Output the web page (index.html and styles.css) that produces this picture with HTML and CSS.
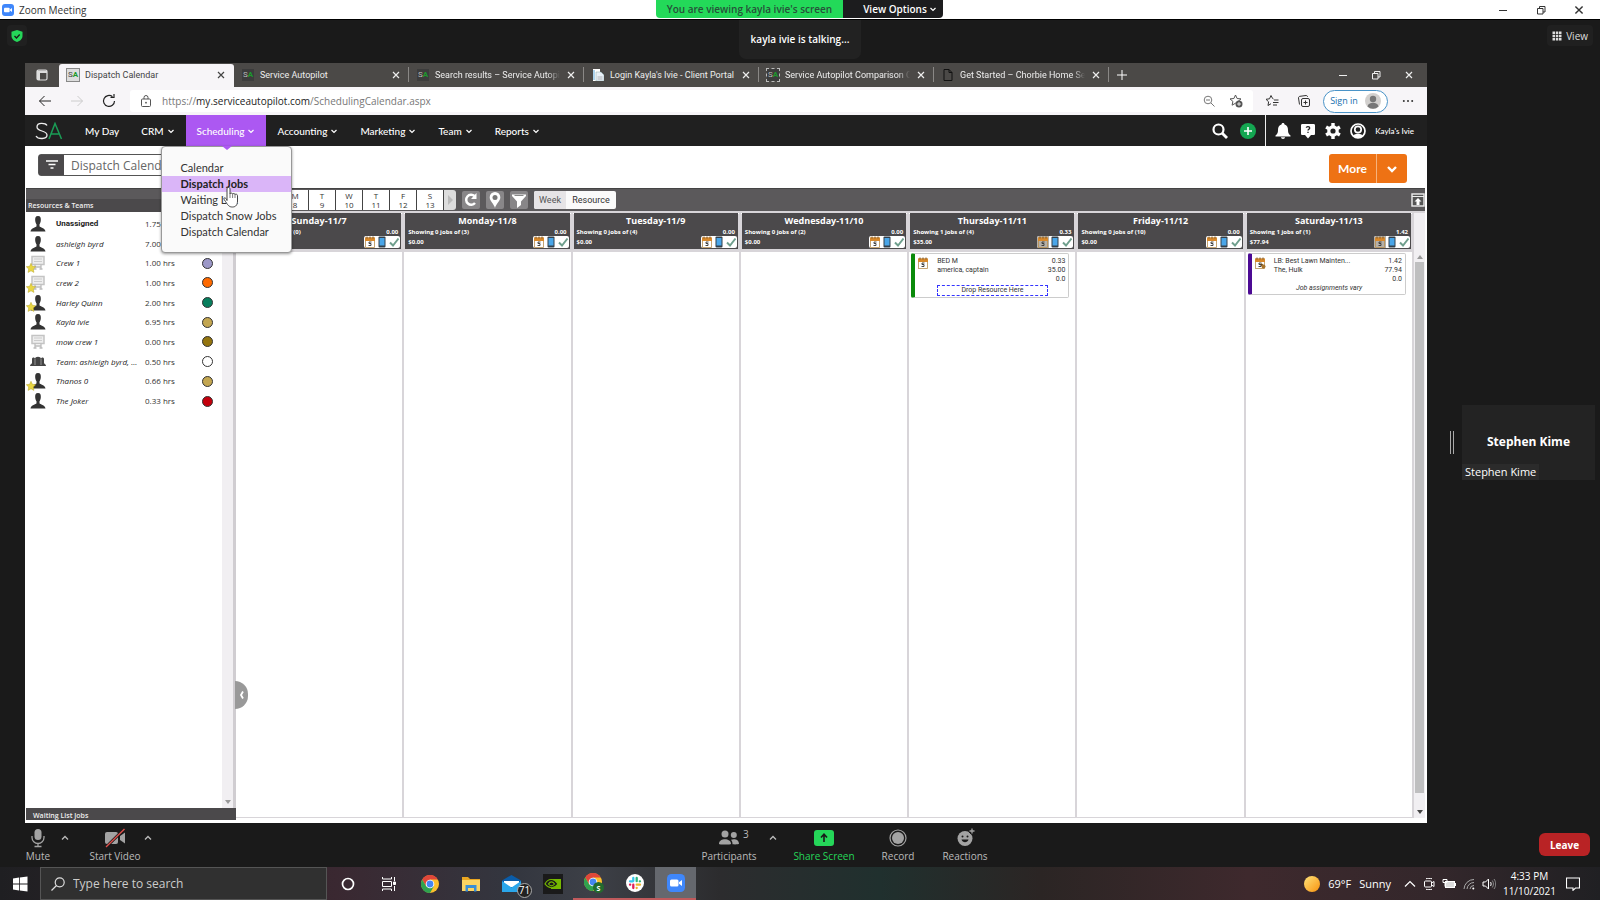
FILE: index.html
```html
<!DOCTYPE html>
<html lang="en">
<head>
    <meta charset="UTF-8">
    <meta name="viewport" content="width=device-width, initial-scale=1.0">
    <title>Zoom Meeting</title>
    <link rel="stylesheet" href="styles.css">
</head>
<body>
    <!-- shared icons -->
    <svg class="sprite" aria-hidden="true">
        <symbol id="i-down" viewBox="0 0 8 8"><path d="M1.5 3l2.500 2.500L6.500 3" fill="none" stroke="currentColor" stroke-width="1.200"/></symbol>
        <symbol id="i-up" viewBox="0 0 8 8"><path d="M1 5.500l3-3 3 3" fill="none" stroke="currentColor" stroke-width="1.300"/></symbol>
        <symbol id="i-x" viewBox="0 0 10 10"><path d="M2 2l6 6M8 2l-6 6" fill="none" stroke="currentColor" stroke-width="1.200"/></symbol>
        <symbol id="i-min" viewBox="0 0 10 10"><path d="M1 5.500h8" stroke="currentColor"/></symbol>
        <symbol id="i-restore" viewBox="0 0 10 10"><path d="M1.500 3.500h5.500v5.500h-5.500zM3.500 3.500v-2h5.500v5.500h-2" fill="none" stroke="currentColor"/></symbol>
        <symbol id="i-person" viewBox="0 0 16 16"><path d="M8 0C5.500 0 5 2 5.200 4.500c.1 2 .8 3 1.300 3.800v2C6 11.500 1 12 .5 15.500h15C15 12 10 11.500 9.500 10.300v-2c.5-.8 1.200-1.800 1.300-3.800C11 2 10.500 0 8 0z" fill="#333"/></symbol>
        <symbol id="i-crew" viewBox="0 0 16 16"><path d="M2 1.500h12v8H2z" fill="#eee" stroke="#c4c4c4" stroke-width="1.500"/><path d="M4 4h8M4 6.500h8" stroke="#ccc"/><path d="M5 9.500v4M11 9.500v4M3.500 14h3M9.500 14h3M5 12h6" fill="none" stroke="#bdbdbd" stroke-width="1.300"/></symbol>
        <symbol id="i-team" viewBox="0 0 16 16"><path d="M0 12c0-2 2-2 2-3V5c0-2 3-2 3 0 0-3 6-3 6 0 0-2 3-2 3 0v4c0 1 2 1 2 3z" fill="#444"/><path d="M5 5v6M11 5v6" stroke="#ccc" stroke-width=".6"/></symbol>
        <symbol id="i-star" viewBox="0 0 10 10"><path d="M5 .3l1.400 3 3.300.4-2.400 2.300.6 3.400L5 7.800 2.100 9.400l.6-3.400L.3 3.700l3.300-.4z" fill="#e8d644" stroke="#b9a52a" stroke-width=".5"/></symbol>
        <symbol id="i-cal" viewBox="0 0 12 12"><rect x="1.500" y="2" width="9" height="9.500" fill="var(--paper, #fff)" stroke="#b78e52" stroke-width=".8"/><path d="M1 1.500h10V5H1z" fill="#d8892b"/><path d="M3 .5v2M6 .5v2M9 .5v2" stroke="#7a5220"/><path d="M7.500 6H5v1.500h2V9.500H4.500" fill="none" stroke="#333" stroke-width=".9"/></symbol>
        <symbol id="i-phone" viewBox="0 0 12 12"><rect x="2.500" y=".5" width="7" height="11" rx="1" fill="#333f4a"/><path d="M3.500 2h5v7.500h-5z" fill="#49a5e8"/></symbol>
        <symbol id="i-check" viewBox="0 0 12 12"><path d="M2 6.500l3 3L10.500 2.500" fill="none" stroke="#6f9f8d" stroke-width="2"/></symbol>
        <symbol id="i-zoom" viewBox="0 0 18 18"><rect width="18" height="18" rx="4.500" fill="#3f87fb"/><rect x="3" y="5.500" width="8.500" height="7" rx="1.500" fill="#fff"/><path d="M12 8.300l3-2.300v6l-3-2.300z" fill="#fff"/></symbol>
        <symbol id="i-chrome" viewBox="0 0 18 18"><circle cx="9" cy="9" r="9" fill="#fbc02d"/><path d="M1.200 4.500A9 9 0 0 1 16.800 4.500H9L5.100 11.300z" fill="#e0473a"/><path d="M1.200 4.500A9 9 0 0 0 9 18l3.900-6.800H5.100z" fill="#2fa24f"/><circle cx="9" cy="9" r="4.300" fill="#fff"/><circle cx="9" cy="9" r="3.400" fill="#4586f1"/></symbol>
    </svg>

    <header class="titlebar">
        <svg class="i12"><use href="#i-zoom"/></svg>
        <span>Zoom Meeting</span>
        <div class="window-buttons">
            <button aria-label="Minimize"><svg class="i10"><use href="#i-min"/></svg></button>
            <button aria-label="Restore"><svg class="i10"><use href="#i-restore"/></svg></button>
            <button aria-label="Close"><svg class="i12"><use href="#i-x"/></svg></button>
        </div>
    </header>
    <div class="share-banner">
        <span class="viewing">You are viewing kayla ivie's screen</span>
        <button class="view-options">View Options <svg class="i8"><use href="#i-down"/></svg></button>
    </div>

    <div class="meeting-top">
        <button class="chip shield" aria-label="Meeting information"><svg class="i12" viewBox="0 0 12 12"><path d="M6 0l5.500 1.800v4C11.500 9 9 11 6 12 3 11 .5 9 .5 5.800v-4z" fill="#25d659"/><path d="M3.500 6l2 2 3.200-3.500" fill="none" stroke="#1a1a1a" stroke-width="1.300"/></svg></button>
        <p class="talking">kayla ivie is talking...</p>
        <button class="chip"><svg class="i10" viewBox="0 0 10 10" fill="#ddd"><path d="M.5.500h2.500v2.500H.5zM3.800.5h2.500v2.500H3.800zM7 .5h2.500v2.500H7zM.5 3.800h2.500v2.500H.5zM3.800 3.800h2.500v2.500H3.800zM7 3.800h2.500v2.500H7zM.5 7h2.500v2.500H.5zM3.800 7h2.500v2.500H3.800zM7 7h2.500v2.500H7z"/></svg> View</button>
    </div>

    <div class="stage">
        <main class="shared">
            <div class="tabs">
                <button class="tab-menu" aria-label="Tab actions"><svg class="i12" viewBox="0 0 12 12"><rect x="1" y="1" width="10" height="10" rx="1.500" fill="none" stroke="#ddd" stroke-width="1.200"/><path d="M1 1.500h10V4H4v7H1z" fill="#ddd"/></svg></button>
                <div class="tab active"><span class="fav light">S<b>A</b></span><span class="tab-name">Dispatch Calendar</span><button aria-label="Close tab"><svg class="i10"><use href="#i-x"/></svg></button></div>
                <div class="tab"><span class="fav">S<b>A</b></span><span class="tab-name">Service Autopilot</span><button aria-label="Close tab"><svg class="i10"><use href="#i-x"/></svg></button></div>
                <div class="tab"><span class="fav">S<b>A</b></span><span class="tab-name fade">Search results – Service Autopilot</span><button aria-label="Close tab"><svg class="i10"><use href="#i-x"/></svg></button></div>
                <div class="tab"><svg class="i12" viewBox="0 0 12 12"><path d="M1 0h7v12H1z" fill="#fff"/><path d="M4 3h5l3 3v6H4z" fill="#e8f0f8" stroke="#8aa" stroke-width=".5"/><path d="M2 1v10" stroke="#58a6dc"/><path d="M5.500 8h5M5.500 10h5" stroke="#888" stroke-width=".6"/></svg><span class="tab-name">Login Kayla's Ivie - Client Portal</span><button aria-label="Close tab"><svg class="i10"><use href="#i-x"/></svg></button></div>
                <div class="tab"><span class="fav dashed">S<b>A</b></span><span class="tab-name fade">Service Autopilot Comparison Ch</span><button aria-label="Close tab"><svg class="i10"><use href="#i-x"/></svg></button></div>
                <div class="tab"><svg class="i12" viewBox="0 0 12 12"><path d="M2 .5h5l3 3v8H2zM7 .5v3h3" fill="none" stroke="#111"/></svg><span class="tab-name fade">Get Started – Chorbie Home Serv</span><button aria-label="Close tab"><svg class="i10"><use href="#i-x"/></svg></button></div>
                <button class="new-tab" aria-label="New tab"><svg class="i12" viewBox="0 0 12 12"><path d="M6 1v10M1 6h10" stroke="#fff"/></svg></button>
                <div class="edge-buttons">
                    <button aria-label="Minimize"><svg class="i10"><use href="#i-min"/></svg></button>
                    <button aria-label="Restore"><svg class="i10"><use href="#i-restore"/></svg></button>
                    <button aria-label="Close"><svg class="i10"><use href="#i-x"/></svg></button>
                </div>
            </div>

            <div class="address-row">
                <button aria-label="Back"><svg class="i14" viewBox="0 0 14 14"><path d="M13 7H1.500M6.500 2l-5 5 5 5" fill="none" stroke="#222"/></svg></button>
                <button aria-label="Forward"><svg class="i14" viewBox="0 0 14 14"><path d="M1 7h11.500M7.500 2l5 5-5 5" fill="none" stroke="#ccc"/></svg></button>
                <button aria-label="Refresh"><svg class="i14" viewBox="0 0 14 14"><path d="M12.500 7a5.500 5.500 0 1 1-2-4.300M8.500 3.500h3.500V0" fill="none" stroke="#222" stroke-width="1.200"/></svg></button>
                <div class="address">
                    <svg class="i12" viewBox="0 0 12 12"><rect x="1.500" y="4" width="9" height="7.500" rx="1" fill="none" stroke="#555"/><path d="M4 4V2.500a2 2 0 0 1 4 0V4" fill="none" stroke="#555"/><circle cx="6" cy="7.700" r=".9" fill="#555"/></svg>
                    <span class="url">https://<b>my.serviceautopilot.com</b>/SchedulingCalendar.aspx</span>
                    <button aria-label="Zoom"><svg class="i12" viewBox="0 0 12 12" fill="none" stroke="#777"><circle cx="5" cy="5" r="3.800"/><path d="M8 8l3.500 3.500M3 5h4"/></svg></button>
                    <button aria-label="Add to favorites"><svg class="i14" viewBox="0 0 14 14"><path d="M6.500 1l1.600 3.500 3.900.4-2.900 2.500.8 3.800-3.400-2-3.400 2 .8-3.800L1 4.900l3.900-.4z" fill="none" stroke="#555"/><circle cx="10" cy="10" r="3.500" fill="#555"/><path d="M10 8v4M8 10h4" stroke="#fff" stroke-width=".8"/></svg></button>
                </div>
                <button aria-label="Favorites"><svg class="i14" viewBox="0 0 14 14" fill="none" stroke="#333"><path d="M8.500 5L7.600 4.500 6 1.500 4.500 4.800 1 5.300l2.600 2.500-.6 3.700 3-1.800"/><path d="M9 6h4.500M8 8.500h5.500M8 11h4"/></svg></button>
                <button class="collections" aria-label="Collections"><svg class="i14" viewBox="0 0 14 14" fill="none" stroke="#333"><rect x="4.500" y="4.500" width="8" height="8" rx="1.500"/><path d="M8.500 6.500v4M6.500 8.500h4M2.500 10.500L1.500 4c0-1 .5-1.500 1.500-1.700L9 1.500c1 0 1.500.5 1.500 1.500"/></svg></button>
                <button class="sign-in">Sign in <svg class="i16" viewBox="0 0 16 16"><circle cx="8" cy="8" r="8" fill="#d2d0ce"/><circle cx="8" cy="6" r="3.200" fill="#777"/><path d="M2.500 13.500c.5-5 10.500-5 11 0a8 8 0 0 1-11 0z" fill="#777"/></svg></button>
                <button class="dots" aria-label="Settings and more"><svg class="i12" viewBox="0 0 12 12" fill="#333"><circle cx="1.800" cy="6" r="1"/><circle cx="6" cy="6" r="1"/><circle cx="10.200" cy="6" r="1"/></svg></button>
            </div>

            <nav class="site-nav">
                <a class="logo" href="#" aria-label="Service Autopilot"><svg viewBox="0 0 28 18"><path d="M12 3.500C10.500 1 2 0 2 5s10 3 10 8c0 4.500-9 4.500-11 1" fill="none" stroke="#eee" stroke-width="1.300"/><path d="M14 17l6-15.500L26.500 17M16 12h8.500" fill="none" stroke="#1a9d56" stroke-width="1.500"/></svg></a>
                <a class="nav-item" href="#">My Day</a>
                <a class="nav-item" href="#">CRM <svg class="i8"><use href="#i-down"/></svg></a>
                <div class="nav-open">
                    <a class="nav-item open" href="#">Scheduling <svg class="i8"><use href="#i-down"/></svg></a>
                    <div class="submenu">
                        <a href="#">Calendar</a>
                        <a class="hover" href="#">Dispatch Jobs</a>
                        <a href="#">Waiting List</a>
                        <a href="#">Dispatch Snow Jobs</a>
                        <a href="#">Dispatch Calendar</a>
                        <svg class="pointer" viewBox="0 0 18 22"><path d="M5 14.500V3c0-2 3-2 3 0v5c0-1.300 2.600-1.200 2.600.2 0-1 2.500-.9 2.500.5 0-.9 2.400-.8 2.400 1V15c0 3.500-1.500 6-5 6-3.500 0-4.500-1.500-8.300-7.500C1 11.500 3.500 11 5 14z" fill="#fff" stroke="#444"/><path d="M8 8v4M10.600 8.500V12M13 9v3" stroke="#444" stroke-width=".7"/></svg>
                    </div>
                </div>
                <a class="nav-item" href="#">Accounting <svg class="i8"><use href="#i-down"/></svg></a>
                <a class="nav-item" href="#">Marketing <svg class="i8"><use href="#i-down"/></svg></a>
                <a class="nav-item" href="#">Team <svg class="i8"><use href="#i-down"/></svg></a>
                <a class="nav-item" href="#">Reports <svg class="i8"><use href="#i-down"/></svg></a>
                <div class="nav-search">
                    <button aria-label="Search"><svg class="i16" viewBox="0 0 16 16" fill="none" stroke="#fff"><circle cx="6.500" cy="6.500" r="5" stroke-width="2.200"/><path d="M10 10l5 5" stroke-width="2.800"/></svg></button>
                    <button aria-label="Add"><svg class="i16" viewBox="0 0 16 16"><circle cx="8" cy="8" r="8" fill="#14a651"/><path d="M8 4v8M4 8h8" stroke="#fff" stroke-width="1.600"/></svg></button>
                </div>
                <div class="nav-user">
                    <button aria-label="Notifications"><svg class="i16" viewBox="0 0 16 16" fill="#fff"><path d="M8 0c1 0 1.500.7 1.500 1.500C12 2.500 13 4 13 7c0 3 .7 4 2.500 5.500V13.500H.5v-1C2.300 11 3 10 3 7c0-3 1-4.500 3.500-5.500C6.500.7 7 0 8 0zM6 14.200h4C10 16.500 6 16.500 6 14.200z"/></svg></button>
                    <button aria-label="Help"><svg class="i16" viewBox="0 0 16 16"><path d="M2.500 1h11C14.500 1 15 1.500 15 2.500v8c0 1-.5 1.500-1.500 1.500H11l-3 3.500L5 12H2.500C1.500 12 1 11.500 1 10.500v-8C1 1.500 1.500 1 2.500 1z" fill="#fff"/><path d="M6.300 4.800C6.500 3 9.700 3.200 9.700 5c0 1.200-1.700 1.300-1.700 2.500M8 8.700V10" fill="none" stroke="#222" stroke-width="1.300"/></svg></button>
                    <button aria-label="Settings"><svg class="i16" viewBox="0 0 16 16"><circle cx="8" cy="8" r="4.200" fill="none" stroke="#fff" stroke-width="3.200"/><path d="M8 0v3M8 13v3M1.100 4l2.600 1.500M12.300 10.500l2.600 1.500M1.100 12l2.600-1.500M12.300 5.500l2.600-1.500" stroke="#fff" stroke-width="3.400"/></svg></button>
                    <button aria-label="Account"><svg class="i16" viewBox="0 0 16 16"><circle cx="8" cy="8" r="7" fill="none" stroke="#fff" stroke-width="1.700"/><circle cx="8" cy="6.500" r="3.200" fill="none" stroke="#fff" stroke-width="1.700"/><path d="M3 13c1.500-3 8.500-3 10 0-2.500 2.500-7.500 2.500-10 0z" fill="#fff"/></svg></button>
                    <span>Kayla's Ivie</span>
                </div>
            </nav>

            <div class="page-head">
                <div class="view-picker">
                    <button aria-label="Filter views"><svg class="i12" viewBox="0 0 12 12"><path d="M0 2h12M2.500 5.500h7M4.500 9h3" stroke="#fff" stroke-width="1.300"/></svg></button>
                    <input type="text" value="Dispatch Calendar" aria-label="View">
                </div>
                <div class="more">
                    <button class="more-main">More</button>
                    <button aria-label="More options"><svg class="i12" viewBox="0 0 12 12"><path d="M2 4l4 4 4-4" fill="none" stroke="#fff" stroke-width="2.400"/></svg></button>
                </div>
            </div>

            <div class="calendar">
                <aside class="resources">
                    <h2>Resources &amp; Teams</h2>
                    <div class="resource-list">
                        <table>
                            <tr><td class="who"><svg class="i16"><use href="#i-person"/></svg></td><th>Unassigned</th><td>1.75 hrs</td><td></td></tr>
                            <tr><td class="who"><svg class="i16"><use href="#i-person"/></svg></td><td class="name">ashleigh byrd</td><td>7.00 hrs</td><td></td></tr>
                            <tr><td class="who"><svg class="i16"><use href="#i-crew"/></svg><svg class="star"><use href="#i-star"/></svg></td><td class="name">Crew 1</td><td>1.00 hrs</td><td><i class="dot lilac"></i></td></tr>
                            <tr><td class="who"><svg class="i16"><use href="#i-crew"/></svg><svg class="star"><use href="#i-star"/></svg></td><td class="name">crew 2</td><td>1.00 hrs</td><td><i class="dot orange"></i></td></tr>
                            <tr><td class="who"><svg class="i16"><use href="#i-person"/></svg><svg class="star"><use href="#i-star"/></svg></td><td class="name">Harley Quinn</td><td>2.00 hrs</td><td><i class="dot green"></i></td></tr>
                            <tr><td class="who"><svg class="i16"><use href="#i-person"/></svg></td><td class="name">Kayla Ivie</td><td>6.95 hrs</td><td><i class="dot tan"></i></td></tr>
                            <tr><td class="who"><svg class="i16"><use href="#i-crew"/></svg></td><td class="name">mow crew 1</td><td>0.00 hrs</td><td><i class="dot brown"></i></td></tr>
                            <tr><td class="who"><svg class="i16"><use href="#i-team"/></svg></td><td class="name">Team: ashleigh byrd, ...</td><td>0.50 hrs</td><td><i class="dot"></i></td></tr>
                            <tr><td class="who"><svg class="i16"><use href="#i-person"/></svg><svg class="star"><use href="#i-star"/></svg></td><td class="name">Thanos 0</td><td>0.66 hrs</td><td><i class="dot tan"></i></td></tr>
                            <tr><td class="who"><svg class="i16"><use href="#i-person"/></svg></td><td class="name">The Joker</td><td>0.33 hrs</td><td><i class="dot red"></i></td></tr>
                        </table>
                        <div class="scroll-left"><i class="arrow-down"></i></div>
                    </div>
                    <h2 class="waiting">Waiting List Jobs</h2>
                    <button class="collapse" aria-label="Collapse panel"><svg class="i10" viewBox="0 0 10 10"><path d="M6 1.500L4 5l2 3.500" fill="none" stroke="#fff" stroke-width="1.800"/></svg></button>
                </aside>

                <section class="schedule">
                    <div class="tools">
                        <div class="mini-week">
                            <button>S<br>7</button><button>M<br>8</button><button>T<br>9</button><button>W<br>10</button><button>T<br>11</button><button>F<br>12</button><button>S<br>13</button>
                            <button class="next" aria-label="Next week"><i></i></button>
                        </div>
                        <button class="tool" aria-label="Refresh"><svg class="i16" viewBox="0 0 16 16"><path d="M12 11a5 5 0 1 1-.5-7" fill="none" stroke="#fff" stroke-width="2.500"/><path d="M13.500 1v6H8z" fill="#fff"/></svg></button>
                        <button class="tool" aria-label="Map"><svg class="i16" viewBox="0 0 16 16"><path d="M8 0a5.300 5.300 0 0 1 5.300 5.500C13.300 9 9 12 8 16 7 12 2.700 9 2.700 5.500A5.300 5.300 0 0 1 8 0z" fill="#fff"/><circle cx="8" cy="5.500" r="2.500" fill="#777"/></svg></button>
                        <button class="tool" aria-label="Filter"><svg class="i16" viewBox="0 0 16 16"><path d="M1 2.500h14V4L10 9.500V13l-4 3V9.500L1 4z" fill="#fff"/><path d="M3.500 3.500h9" stroke="#888"/></svg></button>
                        <div class="mode"><button class="on">Week</button><button>Resource</button></div>
                        <button class="expand" aria-label="Full screen"><svg class="i14" viewBox="0 0 14 14"><rect x="1" y="1" width="12" height="12" fill="#555" stroke="#eee" stroke-width="1.400"/><path d="M1 3.500h12" stroke="#eee"/><path d="M7 5l3.500 3.500H8.500V12h-3V8.500h-2z" fill="#fff"/></svg></button>
                    </div>
                    <div class="board">
                        <div class="days">
                            <div class="day"><header><h3>Sunday-11/7</h3><p><span>Showing 0 jobs of (0)</span><span>0.00</span></p><p><span>$0.00</span></p><div class="flags"><svg><use href="#i-cal"/></svg><svg><use href="#i-phone"/></svg><svg><use href="#i-check"/></svg></div></header></div>
                            <div class="day"><header><h3>Monday-11/8</h3><p><span>Showing 0 jobs of (3)</span><span>0.00</span></p><p><span>$0.00</span></p><div class="flags"><svg><use href="#i-cal"/></svg><svg><use href="#i-phone"/></svg><svg><use href="#i-check"/></svg></div></header></div>
                            <div class="day"><header><h3>Tuesday-11/9</h3><p><span>Showing 0 jobs of (4)</span><span>0.00</span></p><p><span>$0.00</span></p><div class="flags"><svg><use href="#i-cal"/></svg><svg><use href="#i-phone"/></svg><svg><use href="#i-check"/></svg></div></header></div>
                            <div class="day"><header><h3>Wednesday-11/10</h3><p><span>Showing 0 jobs of (2)</span><span>0.00</span></p><p><span>$0.00</span></p><div class="flags"><svg><use href="#i-cal"/></svg><svg><use href="#i-phone"/></svg><svg><use href="#i-check"/></svg></div></header></div>
                            <div class="day"><header><h3>Thursday-11/11</h3><p><span>Showing 1 jobs of (4)</span><span>0.33</span></p><p><span>$35.00</span></p><div class="flags busy"><svg><use href="#i-cal"/></svg><svg><use href="#i-phone"/></svg><svg><use href="#i-check"/></svg></div></header>
                                <article class="job">
                                    <svg class="i12"><use href="#i-cal"/></svg>
                                    <div class="job-text">BED M<br>america, captain</div>
                                    <div class="job-nums">0.33<br>35.00<br>0.0</div>
                                    <p class="drop">Drop Resource Here</p>
                                </article>
                            </div>
                            <div class="day"><header><h3>Friday-11/12</h3><p><span>Showing 0 jobs of (10)</span><span>0.00</span></p><p><span>$0.00</span></p><div class="flags"><svg><use href="#i-cal"/></svg><svg><use href="#i-phone"/></svg><svg><use href="#i-check"/></svg></div></header></div>
                            <div class="day"><header><h3>Saturday-11/13</h3><p><span>Showing 1 jobs of (1)</span><span>1.42</span></p><p><span>$77.94</span></p><div class="flags busy"><svg><use href="#i-cal"/></svg><svg><use href="#i-phone"/></svg><svg><use href="#i-check"/></svg></div></header>
                                <article class="job purple">
                                    <svg class="i12" viewBox="0 0 12 12"><use href="#i-cal"/><path d="M7 7l3.500 3.500" stroke="#6b4a1a" stroke-width="2"/><circle cx="9.500" cy="9.500" r="2" fill="#a8742c"/></svg>
                                    <div class="job-text">LB: Best Lawn Mainten...<br>The, Hulk</div>
                                    <div class="job-nums">1.42<br>77.94<br>0.0</div>
                                    <p class="vary">Job assignments vary</p>
                                </article>
                            </div>
                        </div>
                        <div class="scroll-right"><i class="arrow-up"></i><i class="thumb"></i><i class="arrow-down dark"></i></div>
                    </div>
                </section>
            </div>
        </main>

        <aside class="gallery">
            <i class="grip"></i>
            <div class="tile">
                <strong>Stephen Kime</strong>
                <span>Stephen Kime</span>
            </div>
        </aside>
    </div>

    <div class="meeting-bar">
        <div class="bar-left">
            <button class="action mute"><svg viewBox="0 0 20 20"><rect x="6.500" y="1" width="7" height="11" rx="3.500" fill="#a3a3a3"/><path d="M4 8v1.500a6 6 0 0 0 12 0V8M10 15.500v3M6.500 18.500h7" fill="none" stroke="#a3a3a3" stroke-width="1.300"/></svg>Mute</button>
            <button class="caret" aria-label="Audio options"><svg class="i8"><use href="#i-up"/></svg></button>
            <button class="action video"><svg viewBox="0 0 20 20"><rect x="0" y="4" width="13" height="12" rx="2" fill="#a3a3a3"/><path d="M15 8l5-3.500v11L15 12z" fill="#a3a3a3"/><path d="M1 19L19.500 1" stroke="#1a1a1a" stroke-width="3"/><path d="M1 19L19.500 1" stroke="#e2504c" stroke-width="1.300"/></svg>Start Video</button>
            <button class="caret" aria-label="Video options"><svg class="i8"><use href="#i-up"/></svg></button>
        </div>
        <div class="bar-center">
            <button class="action people"><svg viewBox="0 0 20 20" fill="#a3a3a3"><circle cx="6" cy="6" r="3.500"/><path d="M0 16c-.5-6.500 12.500-6.500 12 0 0 .8-12 .8-12 0z"/><circle cx="14.800" cy="7" r="3"/><path d="M13.500 16.300c0-2-.5-3.300-1.500-4.500 3-1.500 8-.5 8 4 0 .6-4 .7-6.500.5z"/></svg>Participants<span class="count">3</span></button>
            <button class="caret wide" aria-label="Participants options"><svg class="i8"><use href="#i-up"/></svg></button>
            <button class="action share"><svg viewBox="0 0 20 20"><rect y="2" width="20" height="16" rx="3" fill="#25d659"/><path d="M10 14V6.500M7 9.500l3-3.300 3 3.300" fill="none" stroke="#1a1a1a" stroke-width="1.600"/></svg>Share Screen</button>
            <button class="action record"><svg viewBox="0 0 20 20"><circle cx="10" cy="10" r="8" fill="none" stroke="#a3a3a3" stroke-width="1.200"/><circle cx="10" cy="10" r="6" fill="#a3a3a3"/></svg>Record</button>
            <button class="action react"><svg viewBox="0 0 20 20"><circle cx="10" cy="10.500" r="7.500" fill="#a3a3a3"/><path d="M17 0v6M14 3h6" stroke="#1a1a1a" stroke-width="4"/><path d="M17 .5v5M14.500 3h5" stroke="#a3a3a3" stroke-width="1.300"/><path d="M6.500 11.500c1 3.500 6 3.500 7 0z" fill="#1a1a1a"/><circle cx="7.500" cy="8.500" r="1" fill="#1a1a1a"/><circle cx="12.500" cy="8.500" r="1" fill="#1a1a1a"/></svg>Reactions</button>
        </div>
        <button class="leave">Leave</button>
    </div>

    <footer class="taskbar">
        <button class="start" aria-label="Start"><svg class="i16" viewBox="0 0 16 16" fill="#fff"><path d="M1 2.500l6-.9v6H1zM7.800 1.500L15.500.5v7.100H7.800zM1 8.400h6v6l-6-.9zM7.800 8.400h7.700v7.100l-7.700-1z"/></svg></button>
        <label class="search">
            <svg class="i14" viewBox="0 0 14 14" fill="none" stroke="#ddd" stroke-width="1.200"><circle cx="8.700" cy="5.300" r="4.500"/><path d="M5.500 8.500L.5 13.500"/></svg>
            <input type="text" placeholder="Type here to search" aria-label="Type here to search">
        </label>
        <button class="app" aria-label="Cortana"><svg class="i14" viewBox="0 0 14 14"><circle cx="7" cy="7" r="5.500" fill="none" stroke="#fff" stroke-width="1.700"/></svg></button>
        <button class="app" aria-label="Task view"><svg class="i14" viewBox="0 0 14 14" fill="none" stroke="#fff"><path d="M.5 4.500h9v5h-9zM.5 0v2h9V0M.5 14v-2h9v2M12.500 0v4M12.500 9v5"/><path d="M11.500 5h2v2.500h-2z" fill="#fff"/></svg></button>
        <button class="app" aria-label="Chrome"><svg class="i18"><use href="#i-chrome"/></svg></button>
        <button class="app" aria-label="File Explorer"><svg class="i18" viewBox="0 0 18 18"><path d="M0 2h6l2 2h10v12H0z" fill="#e9a621"/><path d="M0 5h18v11H0z" fill="#fcd462"/><path d="M3.500 10h11v6.500h-2.500V13H6v3.500H3.500z" fill="#3a8fd6"/></svg></button>
        <button class="app" aria-label="Mail"><svg class="i20" viewBox="0 0 20 20"><path d="M0 6.500L9.500 1 19 6.500V18H0z" fill="#0a5ca8"/><path d="M2 7h15v6H2z" fill="#fff"/><path d="M0 7l9.500 6.500L19 7v11H0z" fill="#2aa6ea"/></svg><span class="badge">71</span></button>
        <button class="app" aria-label="GeForce Experience"><svg class="i20" viewBox="0 0 20 20"><path d="M0 0h20v20H0z" fill="#1a1a1a"/><path d="M8 5h10v10H8z" fill="#76b900"/><path d="M2 10c3-6 9-6 13 0-4 5-9 5-13 0z" fill="#1a1a1a" stroke="#76b900" stroke-width="1.200"/><path d="M5.500 10c2-3 4.500-2.500 6 0-2 2.500-4 2.500-6 0z" fill="none" stroke="#76b900" stroke-width="1.200"/></svg></button>
        <button class="app running" aria-label="Chrome profile"><svg class="i20" viewBox="0 0 20 20"><g><use href="#i-chrome" width="18" height="18"/></g><circle cx="14.500" cy="14.500" r="5.500" fill="#236b2e"/><text x="12.500" y="17.500" class="profile">S</text></svg></button>
        <button class="app running" aria-label="Slack"><svg class="i18" viewBox="0 0 18 18"><circle cx="9" cy="9" r="9" fill="#fff"/><g stroke-width="2.300" stroke-linecap="round"><path d="M7.300 4v3M4 7.300h3" stroke="#36c5f0"/><path d="M10.700 4v3.200M14 7.300h-.2" stroke="#2eb67d"/><path d="M10.700 10.700H14M10.700 13.800v.2" stroke="#ecb22e"/><path d="M7.300 10.700V14M4 10.700h.2" stroke="#e01e5a"/></g></svg></button>
        <button class="app running current" aria-label="Zoom"><svg class="i18"><use href="#i-zoom"/></svg></button>
        <div class="tray">
            <span class="weather"><i class="sun"></i>69°F <span>Sunny</span></span>
            <svg class="i12" viewBox="0 0 12 12"><path d="M1 8.500l5-5 5 5" fill="none" stroke="#fff" stroke-width="1.200"/></svg>
            <svg class="i12" viewBox="0 0 12 12" fill="none" stroke="#fff"><rect x="1.500" y="3" width="7" height="6" rx="1"/><path d="M8.500 5l2.500-1.500v5L8.500 7M3 .7c1.500-.4 4-.4 6 0M3 11.300c1.500.4 4 .4 6 0"/></svg>
            <svg class="i14" viewBox="0 0 14 14"><rect x="3.500" y="4.500" width="9" height="6" fill="#ddd" stroke="#fff"/><path d="M13.500 6v3M1 2.500h4v3H1zM3 5.500v4" fill="none" stroke="#fff"/></svg>
            <svg class="i12" viewBox="0 0 12 12" fill="none" stroke="#aaa"><path d="M1 11A10 10 0 0 1 11 1.500M4 11a7 7 0 0 1 7-6.500M7 11a4 4 0 0 1 4-3.500"/><circle cx="10.300" cy="10.500" r="1" fill="#fff" stroke="none"/></svg>
            <svg class="i14" viewBox="0 0 14 14" fill="none" stroke="#fff"><path d="M1 5h2.500l3-3v10l-3-3H1zM8.500 5c.8 1 .8 3 0 4"/><path d="M10.300 3.500c1.500 2 1.500 5 0 7M12 2c2.200 3 2.200 7 0 10" stroke="#888"/></svg>
            <time>4:33 PM<br>11/10/2021</time>
            <svg class="note" viewBox="0 0 14 14"><path d="M.5 1h13v10H9.500L7 13.300V11H.5z" fill="none" stroke="#fff" stroke-width="1.100"/></svg>
        </div>
    </footer>
</body>
</html>
```
FILE: styles.css
```css
* {
    box-sizing: border-box;
}

body {
    margin: 0;
    min-height: 100vh;
    display: flex;
    flex-direction: column;
    position: relative;
    background: #1a1a1a;
    color: #fff;
    font-family: "Open Sans", "Noto Sans", sans-serif;
    font-size: 10px;
    line-height: 12px;
}

button, input {
    font: inherit;
    color: inherit;
    background: none;
    border: 0;
    padding: 0;
    margin: 0;
}

button {
    display: flex;
    align-items: center;
    justify-content: center;
}

a {
    color: inherit;
    text-decoration: none;
}

h2, h3, p {
    margin: 0;
}

svg {
    flex: none;
    display: block;
}

.sprite {
    position: absolute;
    width: 0;
    height: 0;
}

.i8 { width: 8px; height: 8px; }
.i10 { width: 10px; height: 10px; }
.i12 { width: 12px; height: 12px; }
.i14 { width: 14px; height: 14px; }
.i16 { width: 16px; height: 16px; }
.i18 { width: 18px; height: 18px; }
.i20 { width: 20px; height: 20px; }

/* zoom window */
.titlebar {
    display: flex;
    align-items: center;
    gap: 5px;
    height: 20px;
    padding: 0 2px;
    background: #fff;
    border-bottom: 1px solid #000;
    color: #333;
}

.window-buttons {
    display: flex;
    margin-left: auto;
}

.window-buttons button {
    width: 38px;
}

.share-banner {
    position: absolute;
    top: 0;
    left: 50%;
    width: 287px;
    margin-left: -144px;
    height: 18px;
    display: flex;
    border-radius: 0 0 4px 4px;
    overflow: hidden;
    font-weight: 600;
}

.viewing {
    flex: none;
    width: 187px;
    line-height: 18px;
    text-align: center;
    background: #23d959;
    color: #27503a;
}

.view-options {
    flex: 1;
    gap: 2px;
    padding-left: 14px;
    background: #1c1c1e;
}

.meeting-top {
    display: flex;
    justify-content: space-between;
    height: 43px;
    padding: 0 7px;
    position: relative;
}

.chip {
    height: 21px;
    margin-top: 5px;
    padding: 0 5px;
    gap: 4px;
    border-radius: 4px;
    background: #202020;
    color: #ddd;
}

.shield {
    padding: 0 4px;
}

.talking {
    position: absolute;
    left: 50%;
    width: 122px;
    margin-left: -61px;
    line-height: 39px;
    text-align: center;
    font-weight: 600;
    background: #222;
    border-radius: 0 0 7px 7px;
}

.stage {
    flex: 1;
    display: flex;
    padding-left: 25px;
}

.shared {
    flex: 1;
    display: flex;
    flex-direction: column;
    min-width: 0;
    padding-bottom: 3px;
    background: #fff;
    color: #333;
}

/* browser */
.tabs {
    display: flex;
    height: 24px;
    background: #4b4947;
    color: #eee;
    font-family: Roboto, sans-serif;
    font-size: 9px;
}

.tab-menu {
    width: 34px;
}

.tab {
    position: relative;
    flex: 0 1 175px;
    min-width: 0;
    display: flex;
    align-items: center;
    gap: 6px;
    padding: 0 8px 1px;
}

.tab:not(.active)::after {
    content: "";
    position: absolute;
    right: 0;
    width: 1px;
    height: 15px;
    background: #8a8886;
}

.tab.active {
    margin-top: 1px;
    padding-bottom: 2px;
    background: #f7f5f8;
    border-radius: 3px 3px 0 0;
    color: #444;
}

.tab-name {
    flex: 1;
    overflow: hidden;
    white-space: nowrap;
}

.fade {
    mask-image: linear-gradient(90deg, #000 90%, transparent);
}

.fav {
    width: 12px;
    height: 12px;
    font-size: 8px;
    line-height: 12px;
    text-align: center;
    background: #3c3c3c;
    color: #bbb;
}

.fav b {
    color: #1c9a2c;
}

.fav.light {
    background: #ddd;
    color: #444;
    outline: 1px solid #888;
}

.fav.dashed {
    outline: 1px dashed #bbb;
}

.new-tab {
    width: 26px;
}

.edge-buttons {
    display: flex;
    margin-left: auto;
    padding-right: 2px;
}

.edge-buttons button {
    width: 33px;
}

.address-row {
    display: flex;
    align-items: center;
    height: 28px;
    padding-left: 4px;
    background: #f7f5f8;
}

.address-row > button {
    width: 32px;
}

.address {
    flex: 1;
    display: flex;
    align-items: center;
    gap: 10px;
    height: 22px;
    margin-left: 5px;
    margin-right: 3px;
    padding: 0 10px;
    border-radius: 3px;
    background: #fff;
    color: #777;
}

.address button {
    margin-left: 4px;
}

.url {
    flex: 1;
}

.url b {
    font-weight: 400;
    color: #222;
}

.address-row .sign-in {
    width: 65px;
    height: 23px;
    margin-left: 3px;
    gap: 7px;
    border: 1px solid #4a94c8;
    border-radius: 12px;
    background: #fff;
    color: #1670ae;
    font-size: 9px;
}

.address-row .dots {
    width: 39px;
}

/* service autopilot */
.site-nav {
    display: flex;
    height: 31px;
    padding-right: 13px;
    background: #202020;
    color: #fff;
    font-family: Lato, sans-serif;
    font-weight: 500;
}

.logo {
    display: flex;
    align-items: center;
    width: 49px;
    padding-left: 10px;
}

.logo svg {
    width: 28px;
    height: 18px;
}

.nav-item {
    display: flex;
    align-items: center;
    gap: 3px;
    height: 31px;
    padding: 0 11px;
}

.nav-open {
    position: relative;
}

.nav-item.open {
    background: #ac58f2;
}

.submenu {
    position: absolute;
    z-index: 2;
    top: 31px;
    left: -25px;
    width: 131px;
    height: 107px;
    padding-top: 13px;
    border: 1px solid #999;
    border-radius: 4px;
    background: #fafafa;
    box-shadow: 0 1px 3px rgba(0,0,0,0.4);
    color: #333;
    font-size: 11px;
    font-weight: 400;
}

.submenu::before {
    content: "";
    position: absolute;
    top: -1px;
    left: 60px;
    border: 5px solid transparent;
    border-top: 4px solid #ac58f2;
    border-bottom: 0;
}

.submenu a {
    display: block;
    padding-left: 19px;
    line-height: 16px;
}

.submenu .hover {
    background: #dab5f8;
    color: #222;
    font-weight: 700;
}

.pointer {
    position: absolute;
    left: 60px;
    top: 39px;
    width: 18px;
    height: 22px;
}

.nav-search, .nav-user {
    display: flex;
    align-items: center;
}

.nav-search {
    margin-left: auto;
    gap: 12px;
    padding-right: 9px;
    border-right: 1px solid #eee;
}

.nav-user {
    gap: 9px;
    padding-left: 9px;
    font-size: 8px;
}

.page-head {
    display: flex;
    justify-content: space-between;
    height: 42px;
    padding: 8px 20px 0 13px;
}

.view-picker {
    display: flex;
    width: 180px;
    height: 22px;
    border: 1px solid #555;
    border-radius: 3px;
}

.view-picker button {
    width: 25px;
    background: #4b494b;
}

.view-picker input {
    flex: 1;
    min-width: 0;
    padding-left: 7px;
    font-size: 12px;
    color: #666;
}

.more {
    display: flex;
    height: 29px;
    border-radius: 3px;
    overflow: hidden;
    background: #ee7214;
    color: #fff;
    font-family: Lato, sans-serif;
    font-size: 12px;
    font-weight: 700;
}

.more button {
    width: 30px;
}

.more .more-main {
    width: 48px;
    border-right: 1px solid #f6b27c;
}

.calendar {
    flex: 1;
    display: flex;
}

.resources {
    position: relative;
    display: flex;
    flex-direction: column;
    width: 211px;
    padding-left: 1px;
    border-right: 3px solid #d0cdd1;
}

.resources h2 {
    height: 24px;
    padding: 11px 0 0 2px;
    margin-right: -3px;
    border-top: 1px solid #444;
    background: linear-gradient(#5b595b 10px, #4b494b 10px);
    color: #eee;
    font-size: 7px;
    font-weight: 600;
    line-height: 12px;
}

.resource-list {
    flex: 1;
    display: flex;
    justify-content: space-between;
    align-items: flex-start;
}

.resource-list table {
    flex: 1;
    height: 197px;
    margin-top: 2px;
    border-collapse: collapse;
    table-layout: fixed;
    font-size: 8px;
    line-height: 10px;
}

.resource-list th, .resource-list td {
    padding: 0;
    text-align: left;
}

.resource-list .who {
    position: relative;
    width: 30px;
    padding-left: 4px;
}

.star {
    position: absolute;
    left: 0;
    bottom: 0;
    width: 10px;
    height: 10px;
}

.resource-list th, .resource-list .name {
    width: 89px;
    color: #222;
}

.resource-list th {
    font-family: Roboto, sans-serif;
}

.name {
    font-style: italic;
}

.dot {
    display: block;
    width: 11px;
    height: 11px;
    margin-left: 18px;
    border: 1px solid #333;
    border-radius: 50%;
    background: #fff;
}

.lilac { background: #9c98c8; }
.orange { background: #ff6a00; }
.green { background: #087f5e; }
.tan { background: #c3a650; }
.brown { background: #94750f; }
.red { background: #c4000c; }

.scroll-left, .scroll-right {
    display: flex;
    flex-direction: column;
    align-items: center;
    align-self: stretch;
    width: 11px;
    padding: 4px 0;
    background: #f1eff2;
}

.scroll-right {
    padding-top: 42px;
}

.arrow-up, .arrow-down {
    width: 0;
    border: 3px solid transparent;
}

.arrow-up {
    border-top: 0;
    border-bottom: 4px solid #999;
}

.arrow-down {
    margin-top: auto;
    border-bottom: 0;
    border-top: 4px solid #999;
}

.arrow-down.dark {
    border-top-color: #444;
}

.thumb {
    flex: 1;
    width: 9px;
    margin: 3px 0 17px;
    background: #bfbfc0;
}

.resources .waiting {
    height: 12px;
    padding: 2px 0 0 7px;
    border: 0;
    background: #4b494b;
}

.collapse {
    position: absolute;
    z-index: 1;
    right: -15px;
    bottom: 111px;
    width: 13px;
    height: 28px;
    border-radius: 0 13px 13px 0;
    background: #999;
}

.schedule {
    flex: 1;
    display: flex;
    flex-direction: column;
    min-width: 0;
}

.tools {
    display: flex;
    align-items: center;
    gap: 6px;
    height: 23px;
    margin-right: 2px;
    padding: 0 0 1px 19px;
    border-top: 1px solid #444;
    background: #5b595b;
}

.mini-week {
    display: flex;
}

.mini-week button {
    width: 27px;
    height: 20px;
    border-right: 1px solid #444;
    background: #fff;
    font-size: 8px;
    line-height: 9px;
}

.mini-week .next {
    width: 12px;
    border: 0;
    border-radius: 0 3px 3px 0;
    background: #ddd;
}

.next i {
    border: 5px solid transparent;
    border-left: 5px solid #bbb;
    border-right: 0;
}

.tool {
    width: 18px;
    height: 18px;
    border-radius: 2px;
    background: #888688;
}

.mode {
    display: flex;
    height: 18px;
    border-radius: 2px;
    overflow: hidden;
    background: #fafafa;
    font-family: Roboto, sans-serif;
    font-size: 9px;
}

.mode button {
    width: 50px;
}

.mode .on {
    width: 32px;
    background: #e6e4e6;
    color: #555;
}

.expand {
    margin-left: auto;
}

.board {
    flex: 1;
    display: flex;
    margin-right: 2px;
    padding-bottom: 2px;
    border-top: 2px solid #d8d5d9;
}

.days {
    flex: 1;
    display: grid;
    grid-template-columns: repeat(7, minmax(0, 1fr));
    border-bottom: 1px solid #d8d5d9;
}

.day {
    border-right: 2px solid #d8d5d9;
}

.day header {
    position: relative;
    height: 36px;
    margin: 0 1px;
    padding: 2px 3px;
    background: #4b494b;
    color: #fff;
    box-shadow: 0 2px 0 1px #d8d5d9;
}

.day h3 {
    font-size: 9px;
    font-weight: 700;
    line-height: 12px;
    text-align: center;
}

.day header p {
    display: flex;
    justify-content: space-between;
    font-size: 6px;
    font-weight: 700;
    line-height: 10px;
}

.flags {
    position: absolute;
    right: 1px;
    bottom: 1px;
    display: flex;
    background: #fff;
    border-radius: 2px;
    overflow: hidden;
}

.flags svg {
    width: 12px;
    height: 12px;
}

.flags.busy svg:first-child {
    --paper: #b5b0a8;
    background: #b5b0a8;
}

.job {
    display: grid;
    grid-template-columns: 20px 1fr auto;
    margin: 4px 6px 0 2px;
    padding: 3px 3px 1px 2px;
    border: 1px solid #ccc;
    border-left: 4px solid #0a8a0a;
    border-radius: 2px;
    font-family: Roboto, sans-serif;
    font-size: 7px;
    line-height: 9px;
}

.job.purple {
    border-left-color: #4c0a94;
}

.job-nums {
    text-align: right;
}

.drop {
    grid-column: 2;
    margin-top: 1px;
    border: 1px dashed #33f;
    text-align: center;
}

.vary {
    grid-column: 2;
    text-align: center;
    font-style: italic;
}

/* gallery */
.gallery {
    width: 173px;
    display: flex;
    align-items: center;
    gap: 8px;
    padding: 0 5px 1px 23px;
}

.grip {
    width: 4px;
    height: 23px;
    border: 1px solid #aaa;
    border-width: 0 1px;
}

.tile {
    flex: 1;
    display: flex;
    flex-direction: column;
    align-items: center;
    height: 75px;
    padding-top: 28px;
    background: #232323;
}

.tile strong {
    font-size: 12px;
    line-height: 18px;
}

.tile span {
    align-self: flex-start;
    margin-top: auto;
    padding: 0 3px;
    background: #2b2b2b;
    font-size: 11px;
    line-height: 16px;
}

/* meeting controls */
.meeting-bar {
    position: relative;
    display: flex;
    justify-content: space-between;
    align-items: center;
    height: 44px;
    padding: 0 10px 1px 16px;
    color: #bbb;
}

.bar-left {
    display: flex;
}

.bar-center {
    position: absolute;
    left: 50%;
    margin-left: -105px;
    display: flex;
}

.action {
    position: relative;
    flex-direction: column;
    gap: 2px;
    white-space: nowrap;
}

.action svg {
    width: 20px;
    height: 20px;
}

.mute { width: 44px; }
.video { width: 56px; margin-left: 17px; }
.people { width: 68px; }
.share { width: 82px; color: #25d659; }
.record { width: 66px; }
.react { width: 68px; }

.caret {
    width: 10px;
    height: 20px;
}

.caret.wide {
    width: 20px;
}

.count {
    position: absolute;
    left: 48px;
    top: 0;
}

.leave {
    width: 51px;
    height: 23px;
    border-radius: 6px;
    background: #b92325;
    color: #fff;
    font-weight: 700;
}

.taskbar {
    display: flex;
    height: 33px;
    background: linear-gradient(90deg, #1f1f22 0%, #3a2831 21%, #33363f 32%, #3d4047 37%, #2c2c2e 45%, #20302e 55%, #2b2524 65%, #3e292d 78%, #33272b 90%, #202023 100%);
}

.start {
    width: 40px;
}

.search {
    display: flex;
    align-items: center;
    gap: 8px;
    width: 287px;
    padding-left: 10px;
    border: 1px solid #555;
    background: #303030;
}

.search input {
    flex: 1;
    min-width: 0;
    font-size: 12px;
}

.search input::placeholder {
    color: #ccc;
    opacity: 1;
}

.app {
    position: relative;
    width: 41px;
}

.running {
    border-bottom: 2px solid #c05a5c;
}

.current {
    background: #65686e;
}

.badge {
    position: absolute;
    right: 0;
    bottom: 2px;
    width: 15px;
    height: 15px;
    border: 1px solid #aaa;
    border-radius: 50%;
    background: #222;
    line-height: 13px;
    text-align: center;
}

.profile {
    fill: #fff;
    font-size: 7px;
    font-weight: 700;
}

.tray {
    display: flex;
    align-items: center;
    gap: 7px;
    margin-left: auto;
    padding-right: 20px;
}

.weather {
    display: flex;
    align-items: center;
    gap: 8px;
    margin-right: 6px;
    font-size: 11px;
}

.sun {
    width: 16px;
    height: 16px;
    border-radius: 50%;
    background: linear-gradient(135deg, #ffe37a, #f8920e);
}

.tray time {
    text-align: center;
    line-height: 15px;
}

.note {
    width: 14px;
    height: 14px;
    margin-left: 3px;
}
```
